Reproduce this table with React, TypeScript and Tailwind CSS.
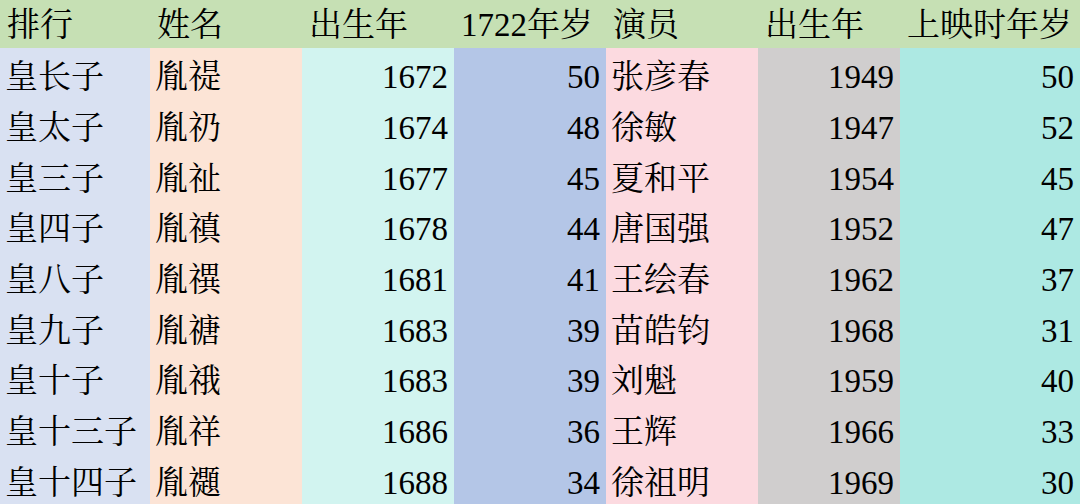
import React from "react";

const rows: [string, string, string, string, string, string, string][] = [
  ["皇长子", "胤禔", "1672", "50", "张彦春", "1949", "50"],
  ["皇太子", "胤礽", "1674", "48", "徐敏", "1947", "52"],
  ["皇三子", "胤祉", "1677", "45", "夏和平", "1954", "45"],
  ["皇四子", "胤禛", "1678", "44", "唐国强", "1952", "47"],
  ["皇八子", "胤禩", "1681", "41", "王绘春", "1962", "37"],
  ["皇九子", "胤禟", "1683", "39", "苗皓钧", "1968", "31"],
  ["皇十子", "胤䄉", "1683", "39", "刘魁", "1959", "40"],
  ["皇十三子", "胤祥", "1686", "36", "王辉", "1966", "33"],
  ["皇十四子", "胤禵", "1688", "34", "徐祖明", "1969", "30"],
];

const colBg = [
  "bg-[#d9e1f2]",
  "bg-[#fce4d6]",
  "bg-[#d2f4f0]",
  "bg-[#b4c6e7]",
  "bg-[#fcdae0]",
  "bg-[#d0cece]",
  "bg-[#ade9e3]",
];
const rightAlign = [false, false, true, true, false, true, true];
const headers = ["排行", "姓名", "出生年", "1722年岁", "演员", "出生年", "上映时年岁"];

export default function App() {
  return (
    <div className="w-[1080px] h-[504px] overflow-hidden bg-white text-black font-['Liberation_Serif','Noto_Serif_CJK_SC','Noto_Sans_CJK_SC',serif] text-[33px] leading-none">
      <div className="grid h-full grid-cols-[150px_152px_152px_152px_152px_142px_180px] grid-rows-[48px_repeat(9,1fr)]">
        {headers.map((h, i) => (
          <div key={"h" + i} className="flex items-center bg-[#c6e0b4] pl-[7px] pt-[3px] whitespace-nowrap">
            {h}
          </div>
        ))}
        {rows.map((r, ri) =>
          r.map((c, ci) => (
            <div
              key={ri + "-" + ci}
              className={`flex items-center whitespace-nowrap pt-[9px] ${colBg[ci]} ${
                rightAlign[ci] ? "justify-end pr-[6px]" : "pl-[5px]"
              }`}
            >
              {c}
            </div>
          ))
        )}
      </div>
    </div>
  );
}
